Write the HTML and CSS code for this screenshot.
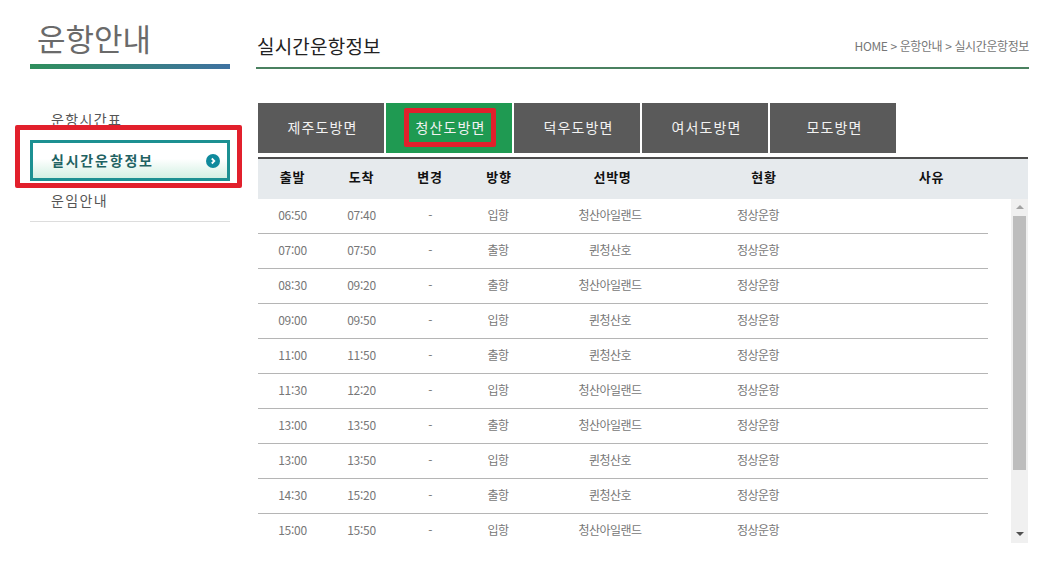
FILE: index.html
```html
<!DOCTYPE html>
<html lang="ko">
  <head>
    <meta charset="UTF-8" />
    <title>실시간운항정보</title>
    <link rel="stylesheet" href="styles.css">
  </head>
  <body>
    <div class="wrap">
      <div class="side">
        <h2 class="side-title">운항안내</h2>
        <ul class="side-menu">
          <li class="side-item">운항시간표</li>
          <li class="side-item active">
            실시간운항정보
            <svg class="go" width="14" height="14" viewBox="0 0 14 14">
              <circle cx="7" cy="7" r="7" fill="#0f8a9c" />
              <path d="M5.8 4.5 L8.3 7 L5.8 9.5" fill="none" stroke="#fff" stroke-width="1.8" />
            </svg>
            <span class="mark mark-side"></span>
          </li>
          <li class="side-item last">운임안내</li>
        </ul>
      </div>

      <div class="main">
        <div class="head">
          <h3 class="head-title">실시간운항정보</h3>
          <span class="crumb">HOME &gt; 운항안내 &gt; 실시간운항정보</span>
        </div>

        <div class="tabs">
          <a class="tab">제주도방면</a>
          <a class="tab on"><span class="tab-text">청산도방면<span class="mark mark-tab"></span></span></a>
          <a class="tab">덕우도방면</a>
          <a class="tab">여서도방면</a>
          <a class="tab">모도방면</a>
        </div>

        <div class="board">
          <table class="grid grid-head">
            <tr>
              <th class="c1">출발</th>
              <th class="c2">도착</th>
              <th class="c3">변경</th>
              <th class="c4">방향</th>
              <th class="c5">선박명</th>
              <th class="c6">현황</th>
              <th class="c7">사유</th>
            </tr>
          </table>
          <div class="scroll">
            <div class="rows">
              <table class="grid grid-body">
                <tr><td class="c1">06:50</td><td class="c2">07:40</td><td class="c3">-</td><td class="c4">입항</td><td class="c5">청산아일랜드</td><td class="c6">정상운항</td><td></td></tr>
                <tr><td class="c1">07:00</td><td class="c2">07:50</td><td class="c3">-</td><td class="c4">출항</td><td class="c5">퀸청산호</td><td class="c6">정상운항</td><td></td></tr>
                <tr><td class="c1">08:30</td><td class="c2">09:20</td><td class="c3">-</td><td class="c4">출항</td><td class="c5">청산아일랜드</td><td class="c6">정상운항</td><td></td></tr>
                <tr><td class="c1">09:00</td><td class="c2">09:50</td><td class="c3">-</td><td class="c4">입항</td><td class="c5">퀸청산호</td><td class="c6">정상운항</td><td></td></tr>
                <tr><td class="c1">11:00</td><td class="c2">11:50</td><td class="c3">-</td><td class="c4">출항</td><td class="c5">퀸청산호</td><td class="c6">정상운항</td><td></td></tr>
                <tr><td class="c1">11:30</td><td class="c2">12:20</td><td class="c3">-</td><td class="c4">입항</td><td class="c5">청산아일랜드</td><td class="c6">정상운항</td><td></td></tr>
                <tr><td class="c1">13:00</td><td class="c2">13:50</td><td class="c3">-</td><td class="c4">출항</td><td class="c5">청산아일랜드</td><td class="c6">정상운항</td><td></td></tr>
                <tr><td class="c1">13:00</td><td class="c2">13:50</td><td class="c3">-</td><td class="c4">입항</td><td class="c5">퀸청산호</td><td class="c6">정상운항</td><td></td></tr>
                <tr><td class="c1">14:30</td><td class="c2">15:20</td><td class="c3">-</td><td class="c4">출항</td><td class="c5">퀸청산호</td><td class="c6">정상운항</td><td></td></tr>
                <tr><td class="c1">15:00</td><td class="c2">15:50</td><td class="c3">-</td><td class="c4">입항</td><td class="c5">청산아일랜드</td><td class="c6">정상운항</td><td></td></tr>
              </table>
            </div>
            <div class="bar">
              <span class="arrow up"></span>
              <div class="track"><div class="thumb"></div></div>
              <span class="arrow down"></span>
            </div>
          </div>
        </div>
      </div>
    </div>
  </body>
</html>
```

FILE: styles.css
```css
html, body {
  margin: 0;
  padding: 0;
  height: 100%;
  overflow: hidden;
}

body {
  background: #fff;
  color: #777;
  font-family: 'Noto Sans CJK KR', 'Noto Sans', sans-serif;
}

.wrap {
  display: flex;
  padding-left: 30px;
}

/* left column */
.side {
  width: 200px;
  margin-right: 26px;
}

.side-title {
  margin: 0;
  height: 64px;
  padding-left: 7px;
  box-sizing: border-box;
  font-size: 31px;
  font-weight: 400;
  line-height: 76px;
  color: #6a6a6a;
}

.side-menu {
  list-style: none;
  margin: 0;
  padding: 0;
  border-top: 5px solid transparent;
  border-image: linear-gradient(90deg, #2f8f5c, #3f72a2) 1;
}

.side-item {
  position: relative;
  height: 40px;
  padding-left: 21px;
  font-size: 14px;
  line-height: 38px;
  letter-spacing: 1.4px;
  color: #555;
}

.side-item:first-child {
  margin-top: 30px;
  height: 41px;
  line-height: 40px;
}

.side-item.active {
  display: flex;
  align-items: center;
  justify-content: space-between;
  box-sizing: border-box;
  height: 41px;
  padding: 0 7px 2px 18px;
  border: 3px solid #1c9092;
  background: linear-gradient(#fff 45%, #d3f0e3);
  font-weight: 700;
  letter-spacing: 1.8px;
  color: #1f6363;
}

.go {
  margin-top: 2px;
}

.side-item.last {
  border-bottom: 1px solid #ddd;
}

/* red annotation boxes */
.mark {
  position: absolute;
  box-sizing: border-box;
  border: 5px solid #e2202c;
  border-radius: 2px;
  pointer-events: none;
}

.mark-side {
  left: -18px;
  top: -18px;
  width: 227px;
  height: 63px;
}

.mark-tab {
  left: -12px;
  top: -7px;
  width: 92px;
  height: 39px;
}

/* right column */
.main {
  width: 773px;
}

.head {
  display: flex;
  align-items: flex-start;
  justify-content: space-between;
  height: 67px;
  border-bottom: 2px solid #4a8160;
}

.head-title {
  margin: 0;
  padding-top: 31px;
  padding-left: 1px;
  font-size: 19px;
  font-weight: 400;
  line-height: 30px;
  letter-spacing: 0.2px;
  color: #222;
}

.crumb {
  padding-top: 37px;
  font-size: 12px;
  line-height: 18px;
  letter-spacing: -0.39px;
  color: #777;
}

.tabs {
  display: flex;
  gap: 2px;
  margin: 34px 0 4px 2px;
}

.tab {
  box-sizing: border-box;
  width: 126px;
  height: 50px;
  padding-left: 3px;
  background: #5a5a5a;
  color: #f2f2f2;
  font-size: 14px;
  line-height: 48px;
  letter-spacing: 1.1px;
  text-align: center;
}

.tab.on {
  background: #1f9a52;
}

.tab-text {
  position: relative;
  display: inline-block;
  line-height: 25px;
}

.board {
  margin-left: 2px;
  width: 770px;
  border-top: 2px solid #4d4d4d;
}

.grid {
  width: 100%;
  border-collapse: collapse;
  table-layout: fixed;
}

.grid-head {
  background: #e6eaed;
}

.grid-head th {
  box-sizing: border-box;
  height: 40px;
  padding: 0 0 6px;
  font-size: 13px;
  font-weight: 700;
  letter-spacing: 0.7px;
  color: #111;
}

.c1, .c2 { width: 69px; }
.c3, .c4 { width: 68px; }
.c5 { width: 156px; }
.c6 { width: 140px; }

/* header labels don't sit quite over their cells */
.grid-head th.c4 { padding-left: 2px; }
.grid-head th.c5 { padding-left: 5px; }
.grid-head th.c6 { padding-left: 12px; }
.grid-head th.c7 { padding-left: 7px; }

.scroll {
  display: flex;
  justify-content: space-between;
  height: 344px;
}

.rows {
  width: 730px;
  overflow: hidden;
}

.grid-body td {
  height: 30px;
  padding: 0 0 4px;
  border-bottom: 1px solid #b5b5b5;
  font-size: 12px;
  letter-spacing: -0.5px;
  color: #777;
  text-align: center;
}

.grid-body td.c1, .grid-body td.c2 {
  letter-spacing: -0.3px;
}

/* scrollbar, drawn by hand */
.bar {
  display: flex;
  flex-direction: column;
  align-items: center;
  width: 17px;
  background: #f0f0f0;
}

.arrow {
  width: 0;
  height: 0;
  margin: 7px 0;
  border-left: 4px solid transparent;
  border-right: 4px solid transparent;
}

.arrow.up {
  margin-top: 6px;
  border-bottom: 4px solid #a3a3a3;
}

.arrow.down {
  border-top: 4px solid #505050;
}

.track {
  flex-grow: 1;
  width: 100%;
}

.thumb {
  width: 13px;
  height: 254px;
  margin-left: 2px;
  background: #bdbdbd;
}
```
